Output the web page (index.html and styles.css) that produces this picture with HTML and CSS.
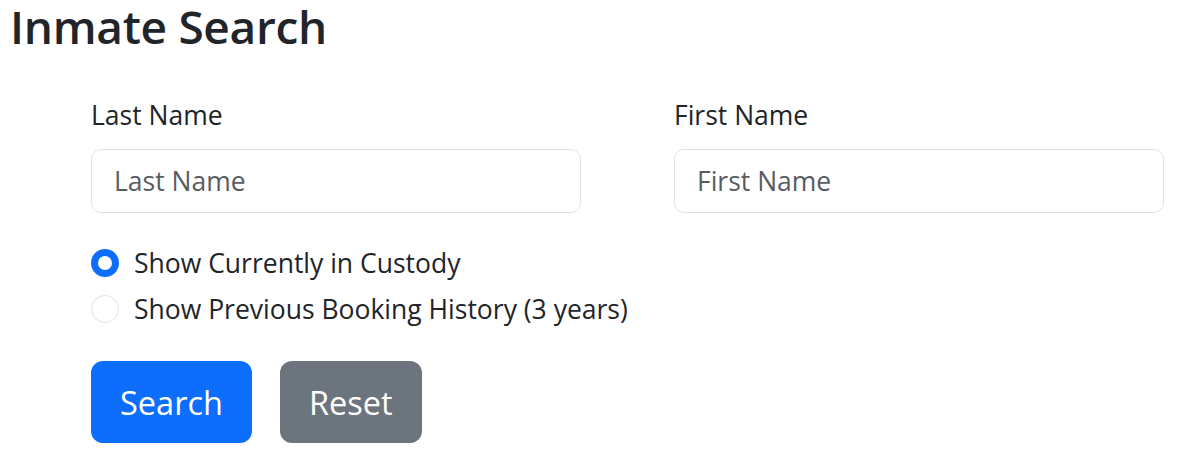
FILE: index.html
```html
<!DOCTYPE html>
<html lang="en">
<head>
    <meta charset="UTF-8">
    <meta name="viewport" content="width=device-width, initial-scale=1.0">
    <title>Inmate Search</title>
    <link rel="stylesheet" href="styles.css">
</head>
<body>

<div class="page">
    <h1 class="page-title">Inmate Search</h1>

    <form class="search-form" id="searchForm">
        <div class="name-row">
            <div class="field">
                <label for="lastName">Last Name</label>
                <input type="text" id="lastName" class="text-input" placeholder="Last Name">
            </div>
            <div class="field">
                <label for="firstName">First Name</label>
                <input type="text" id="firstName" class="text-input" placeholder="First Name">
            </div>
        </div>

        <!-- Custody options -->
        <div class="options">
            <label class="option">
                <input type="radio" name="range" value="current" checked>
                <span>Show Currently in Custody</span>
            </label>
            <label class="option">
                <input type="radio" name="range" value="history">
                <span>Show Previous Booking History (3 years)</span>
            </label>
        </div>

        <div class="actions">
            <button type="submit" class="btn btn-primary">Search</button>
            <button type="reset" class="btn btn-secondary">Reset</button>
        </div>
    </form>
</div>

</body>
</html>
```

FILE: styles.css
```css
body {
    margin: 0;
    font-family: "Open Sans", "Noto Sans", Arial, sans-serif;
    color: #212529;
    background-color: #fff;
}
.page {
    padding: 0 29px 0 10px;
}
.page-title {
    margin: 0;
    font-size: 46px;
    font-weight: 600;
    line-height: 52px;
    letter-spacing: -0.3px;
}
.search-form {
    padding-left: 81px;
    margin-top: 45px;
}
.name-row {
    display: grid;
    grid-template-columns: 490px 490px;
    column-gap: 93px;
}
.field label {
    display: block;
    font-size: 26.5px;
    line-height: 36px;
    margin-bottom: 16px;
}
.text-input {
    box-sizing: border-box;
    width: 100%;
    height: 64px;
    padding: 0 22px;
    font-family: inherit;
    font-size: 26.5px;
    color: #212529;
    border: 1px solid #dee2e6;
    border-radius: 10px;
    outline: none;
}
.text-input::placeholder {
    color: #595c5f;
}
.options {
    margin-top: 27px;
}
.option {
    display: flex;
    align-items: center;
    height: 46px;
    font-size: 26.5px;
    cursor: pointer;
}
.option input {
    appearance: none;
    box-sizing: border-box;
    width: 28px;
    height: 28px;
    margin: 0 15px 0 0;
    border: 1px solid #dee2e6;
    border-radius: 50%;
    background-color: #fff;
}
.option input:checked {
    border: 7px solid #0d6efd;
}
.actions {
    display: flex;
    gap: 28px;
    margin-top: 29px;
}
.btn {
    height: 82px;
    padding: 0 29px;
    font-family: inherit;
    font-size: 32.5px;
    color: #fff;
    border: none;
    border-radius: 12px;
    cursor: pointer;
}
.btn-primary {
    background-color: #0d6efd;
}
.btn-secondary {
    background-color: #6c757d;
}
```
